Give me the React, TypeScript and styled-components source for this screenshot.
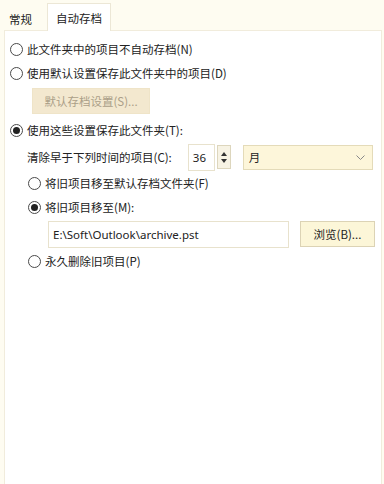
import React from 'react';
import styled, { createGlobalStyle } from 'styled-components';

const GlobalStyle = createGlobalStyle`
  html, body {
    margin: 0;
    padding: 0;
    background: #fefcf1;
  }
  * {
    box-sizing: border-box;
  }
`;

const Window = styled.div`
  width: 384px;
  height: 484px;
  display: flex;
  flex-direction: column;
  background: #fefcf1;
  font-family: 'Noto Sans CJK SC', 'Noto Sans', sans-serif;
  font-size: 11.5px;
  color: #222222;
`;

const TabBar = styled.div`
  height: 30px;
  display: flex;
  align-items: flex-end;
  padding-left: 2px;
`;

const Tab = styled.div<{ $active?: boolean }>`
  height: ${(p) => (p.$active ? '28px' : '26px')};
  display: flex;
  align-items: center;
  padding: 0 ${(p) => (p.$active ? '8px' : '6px')};
  margin-left: ${(p) => (p.$active ? '8px' : '0')};
  background: ${(p) => (p.$active ? '#ffffff' : 'transparent')};
  border: 1px solid ${(p) => (p.$active ? '#ece7d6' : 'transparent')};
  border-bottom: none;
  margin-bottom: -1px;
  position: relative;
  z-index: 1;
`;

const Panel = styled.div`
  flex: 1;
  margin: 0 2px 0 4px;
  background: #ffffff;
  border: 1px solid #f1ecdc;
  border-bottom: none;
  padding: 6px 0 0 5px;
  display: flex;
  flex-direction: column;
`;

const Row = styled.div<{ $indent?: number; $top?: number; $h?: number }>`
  display: flex;
  align-items: center;
  height: ${(p) => p.$h ?? 24}px;
  margin-left: ${(p) => p.$indent ?? 0}px;
  margin-top: ${(p) => p.$top ?? 0}px;
`;

const RadioCircle = styled.span<{ $checked?: boolean }>`
  width: 13px;
  height: 13px;
  border-radius: 50%;
  border: 1px solid #4a4a4a;
  background: #fff;
  display: inline-flex;
  align-items: center;
  justify-content: center;
  margin-right: 4px;
  flex: none;

  &::after {
    content: '';
    width: 7px;
    height: 7px;
    border-radius: 50%;
    background: ${(p) => (p.$checked ? '#222222' : 'transparent')};
  }
`;

const Label = styled.span`
  white-space: nowrap;
`;

const Button = styled.div<{ $disabled?: boolean; $width: number }>`
  width: ${(p) => p.$width}px;
  height: 26px;
  display: flex;
  align-items: center;
  justify-content: center;
  background: ${(p) => (p.$disabled ? '#f3e8cf' : '#fcf6d8')};
  border: 1px solid ${(p) => (p.$disabled ? '#efe4c8' : '#dcd3b5')};
  color: ${(p) => (p.$disabled ? '#ab9f88' : '#222222')};
  white-space: nowrap;
`;

const TextBox = styled.div<{ $width: number }>`
  width: ${(p) => p.$width}px;
  height: 27px;
  display: flex;
  align-items: center;
  padding-left: 4px;
  background: #fff;
  border: 1px solid #e8e2cd;
  font-family: 'Noto Sans', 'Noto Sans CJK SC', sans-serif;
  font-size: 11.5px;
  white-space: nowrap;
`;

const Spin = styled.div`
  width: 14px;
  height: 24px;
  margin-left: 2px;
  border: 1px solid #ddd6bd;
  background: #f7f3e4;
  display: flex;
  flex-direction: column;
  align-items: center;
  justify-content: center;
  gap: 3px;
`;

const Select = styled.div`
  width: 130px;
  height: 25px;
  margin-left: 12px;
  display: flex;
  align-items: center;
  justify-content: space-between;
  padding: 0 7px 0 5px;
  background: #fdf6da;
  border: 1px solid #e4dbb9;
`;

const Gap = styled.div<{ $w: number }>`
  width: ${(p) => p.$w}px;
  flex: none;
`;

const Radio = ({ checked, children, indent, top }: { checked?: boolean; children: React.ReactNode; indent?: number; top?: number }) => (
  <Row $indent={indent} $top={top}>
    <RadioCircle $checked={checked} />
    <Label>{children}</Label>
  </Row>
);

const App = (): JSX.Element => (
  <>
    <GlobalStyle />
    <Window>
      <TabBar>
        <Tab>常规</Tab>
        <Tab $active>自动存档</Tab>
      </TabBar>
      <Panel>
        <Radio>此文件夹中的项目不自动存档(N)</Radio>
        <Radio>使用默认设置保存此文件夹中的项目(D)</Radio>
        <Row $indent={22} $top={2} $h={27}>
          <Button $disabled $width={118}>默认存档设置(S)...</Button>
        </Row>
        <Radio checked top={4}>使用这些设置保存此文件夹(T):</Radio>
        <Row $h={28} $indent={17} $top={1}>
          <Label>清除早于下列时间的项目(C):</Label>
          <Gap $w={16} />
          <TextBox $width={27}>36</TextBox>
          <Spin>
            <svg width="6" height="4" viewBox="0 0 6 4"><path d="M0 4 L3 0 L6 4 Z" fill="#333" /></svg>
            <svg width="6" height="4" viewBox="0 0 6 4"><path d="M0 0 L3 4 L6 0 Z" fill="#333" /></svg>
          </Spin>
          <Select>
            <span>月</span>
            <svg width="9" height="5" viewBox="0 0 9 5"><path d="M0.5 0.5 L4.5 4.5 L8.5 0.5" fill="none" stroke="#888" strokeWidth="1" /></svg>
          </Select>
        </Row>
        <Radio indent={18}>将旧项目移至默认存档文件夹(F)</Radio>
        <Radio checked indent={18}>将旧项目移至(M):</Radio>
        <Row $indent={38} $top={1} $h={28}>
          <TextBox $width={241}>E:\Soft\Outlook\archive.pst</TextBox>
          <Gap $w={11} />
          <Button $width={75}>浏览(B)...</Button>
        </Row>
        <Radio indent={18} top={1}>永久删除旧项目(P)</Radio>
      </Panel>
    </Window>
  </>
);

export default App;
